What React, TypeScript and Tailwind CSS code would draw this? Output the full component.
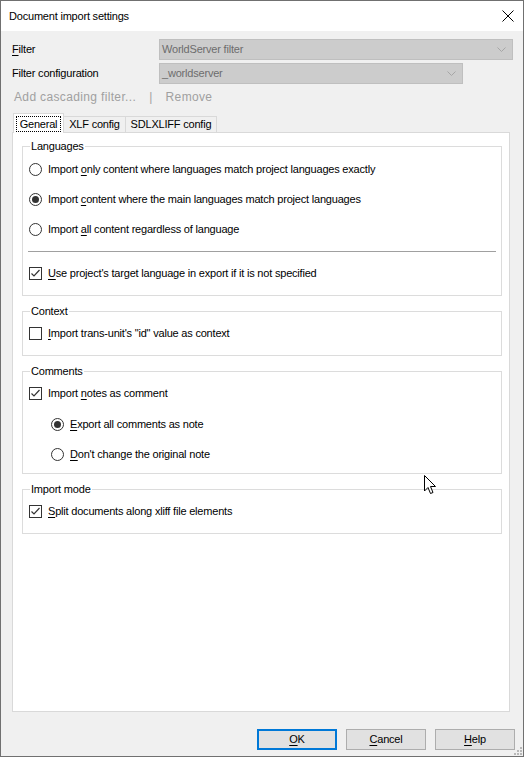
import React from "react";

const FONT = "font-['Segoe_UI','Liberation_Sans',Arial,sans-serif] text-[11px] tracking-[-0.2px]";

function Mn({ children }: { children: React.ReactNode }) {
  return <span className="underline underline-offset-[2px]">{children}</span>;
}

function Radio({ checked, children, indent, className = "" }: { checked?: boolean; children: React.ReactNode; indent?: boolean; className?: string }) {
  return (
    <div className={`flex h-[20px] items-center ${indent ? "pl-[28px]" : "pl-[6px]"} ${className}`}>
      <span className="flex h-[13px] w-[13px] shrink-0 items-center justify-center rounded-full border border-[#333333] bg-white">
        {checked && <span className="h-[7px] w-[7px] rounded-full bg-[#333333]" />}
      </span>
      <span className="ml-[6px] text-black">{children}</span>
    </div>
  );
}

function Check({ checked, children, className = "" }: { checked?: boolean; children: React.ReactNode; className?: string }) {
  return (
    <div className={`flex h-[20px] items-center pl-[6px] ${className}`}>
      <span className="flex h-[13px] w-[13px] shrink-0 items-center justify-center border border-[#333333] bg-white">
        {checked && (
          <svg width="11" height="11" viewBox="0 0 11 11">
            <path d="M1.5 5.5 L4 8 L9.5 2" fill="none" stroke="#333333" strokeWidth="1.2" />
          </svg>
        )}
      </span>
      <span className="ml-[6px] text-black">{children}</span>
    </div>
  );
}

function Group({ title, children, className = "" }: { title: string; children: React.ReactNode; className?: string }) {
  return (
    <fieldset className={`border border-[#dcdcdc] ${className}`}>
      <legend className="ml-[7px] px-[1px] leading-[16px] text-black">{title}</legend>
      {children}
    </fieldset>
  );
}

function Combo({ value, width }: { value: string; width: string }) {
  return (
    <div className={`flex h-[21px] ${width} items-center justify-between border border-[#bfbfbf] bg-[#cccccc] pl-[2px] pr-[6px]`}>
      <span className="text-[#6d6d6d]">{value}</span>
      <svg width="9" height="5" viewBox="0 0 9 5">
        <path d="M0.5 0.5 L4.5 4.5 L8.5 0.5" fill="none" stroke="#a6a6a6" strokeWidth="1" />
      </svg>
    </div>
  );
}

function Button({ children, primary }: { children: React.ReactNode; primary?: boolean }) {
  return (
    <div
      className={`flex h-[21px] w-[80px] items-center justify-center bg-[#e1e1e1] text-black ${
        primary ? "border-2 border-[#0078d7]" : "border border-[#adadad]"
      }`}
    >
      {children}
    </div>
  );
}

export default function App() {
  return (
    <div className={`relative flex h-[757px] w-[524px] flex-col overflow-hidden border border-[#707070] bg-[#f0f0f0] ${FONT}`}>
      {/* Title bar */}
      <div className="flex h-[30px] shrink-0 items-center justify-between bg-white pl-[8px] pr-[8px]">
        <span className="text-black">Document import settings</span>
        <svg width="12" height="12" viewBox="0 0 12 12" className="mr-[1px]">
          <path d="M0.5 0.5 L11.5 11.5 M11.5 0.5 L0.5 11.5" stroke="#000" strokeWidth="1" />
        </svg>
      </div>

      {/* Filter rows */}
      <div className="mt-[8px] flex flex-col gap-[3px] pl-[11px]">
        <div className="flex items-center">
          <span className="w-[147px] text-black">
            <Mn>F</Mn>ilter
          </span>
          <Combo value="WorldServer filter" width="w-[354px]" />
        </div>
        <div className="flex items-center">
          <span className="w-[147px] text-black">Filter configuration</span>
          <Combo value="_worldserver" width="w-[304px]" />
        </div>
      </div>

      {/* Cascading filter links */}
      <div className="mt-[4px] flex h-[18px] items-center pl-[13px] text-[12px] tracking-[0.35px] text-[#a0a0a0]">
        <span>Add cascading filter...</span>
        <span className="ml-[13px]">|</span>
        <span className="ml-[13px]">Remove</span>
      </div>

      {/* Tabs */}
      <div className="mt-[7px] flex items-end pl-[12px]">
        <div className="relative z-10 -mb-px flex h-[20px] w-[51px] items-center justify-center border border-b-0 border-[#d9d9d9] bg-white">
          <span className="border border-dotted border-black px-[3px] leading-[14px] text-black">General</span>
        </div>
        <div className="flex h-[16px] w-[62px] items-center justify-center border border-l-0 border-b-0 border-[#d9d9d9] text-black">
          XLF config
        </div>
        <div className="flex h-[16px] w-[91px] items-center justify-center border border-l-0 border-b-0 border-[#d9d9d9] text-black">
          SDLXLIFF config
        </div>
      </div>

      {/* Tab panel */}
      <div className="ml-[11px] mr-[13px] flex h-[580px] flex-col border border-[#d9d9d9] bg-white pl-[9px] pr-[7px] pt-[5px]">
        <Group title="Languages" className="pb-[12px]">
          <div className="mt-[5px] flex flex-col gap-[10px]">
            <Radio>
              Import <Mn>o</Mn>nly content where languages match project languages exactly
            </Radio>
            <Radio checked>
              Import <Mn>c</Mn>ontent where the main languages match project languages
            </Radio>
            <Radio>
              Import <Mn>a</Mn>ll content regardless of language
            </Radio>
          </div>
          <div className="mx-[5px] mt-[12px] mb-[11px] h-px bg-[#a0a0a0]" />
          <Check checked>
            <Mn>U</Mn>se project's target language in export if it is not specified
          </Check>
        </Group>

        <Group title="Context" className="mt-[7px] pb-[12px]">
          <Check className="mt-[4px]">
            <Mn>I</Mn>mport trans-unit's "id" value as context
          </Check>
        </Group>

        <Group title="Comments" className="mt-[7px] pb-[9px]">
          <Check checked className="mt-[4px]">
            Import <Mn>n</Mn>otes as comment
          </Check>
          <Radio checked indent className="mt-[11px]">
            <Mn>E</Mn>xport all comments as note
          </Radio>
          <Radio indent className="mt-[10px]">
            <Mn>D</Mn>on't change the original note
          </Radio>
        </Group>

        <Group title="Import mode" className="mt-[7px] pb-[12px]">
          <Check checked className="mt-[4px]">
            <Mn>S</Mn>plit documents along xliff file elements
          </Check>
        </Group>
      </div>

      {/* Buttons */}
      <div className="mt-[17px] flex justify-end gap-[9px] pr-[8px]">
        <Button primary>
          <Mn>O</Mn>K
        </Button>
        <Button>
          <Mn>C</Mn>ancel
        </Button>
        <Button>
          <Mn>H</Mn>elp
        </Button>
      </div>

      {/* Resize grip */}
      <svg width="8" height="8" viewBox="0 0 8 8" className="absolute bottom-[1px] right-[1px]">
        <rect x="6" y="0" width="2" height="2" fill="#b8b8b8" />
        <rect x="3" y="3" width="2" height="2" fill="#b8b8b8" />
        <rect x="6" y="3" width="2" height="2" fill="#b8b8b8" />
        <rect x="0" y="6" width="2" height="2" fill="#b8b8b8" />
        <rect x="3" y="6" width="2" height="2" fill="#b8b8b8" />
        <rect x="6" y="6" width="2" height="2" fill="#b8b8b8" />
      </svg>

      {/* Mouse cursor */}
      <svg width="13" height="20" viewBox="0 0 13 20" className="absolute left-[423px] top-[474px]">
        <path d="M0.5 0.5 L0.5 16 L4 12.5 L6.5 18.5 L9 17.5 L6.5 11.5 L11.5 11.5 Z" fill="#fff" stroke="#000" strokeWidth="1" strokeLinejoin="round" />
      </svg>
    </div>
  );
}
